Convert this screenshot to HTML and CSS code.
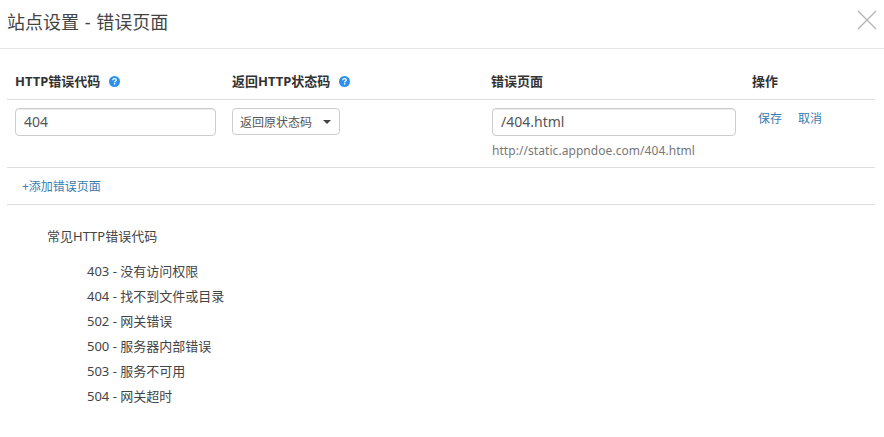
FILE: index.html
```html
<!DOCTYPE html>
<html lang="zh-CN">
<head>
<meta charset="utf-8">
<title>站点设置 - 错误页面</title>
<link rel="stylesheet" href="styles.css">
</head>
<body>
<header class="head">
  <h1 class="title">站点设置 - 错误页面</h1>
  <svg class="close" width="20" height="20" viewBox="0 0 20 20"><path d="M1 1L19 19M19 1L1 19" fill="none" stroke="#b4b4b4" stroke-width="1.3"/></svg>
</header>
<main class="content">
  <div class="row row-head">
    <div class="cell th">HTTP错误代码
      <svg class="help" width="11" height="11" viewBox="0 0 11 11"><circle cx="5.5" cy="5.5" r="5.5" fill="#2b8fee"/><path d="M3.7 4.2C3.8 3.2 4.5 2.7 5.5 2.7C6.5 2.7 7.3 3.3 7.3 4.1C7.3 5.2 5.6 5.2 5.6 6.4" fill="none" stroke="#fff" stroke-width="1.3"/><rect x="4.9" y="7.2" width="1.4" height="1.4" fill="#fff"/></svg>
    </div>
    <div class="cell th">返回HTTP状态码
      <svg class="help" width="11" height="11" viewBox="0 0 11 11"><circle cx="5.5" cy="5.5" r="5.5" fill="#2b8fee"/><path d="M3.7 4.2C3.8 3.2 4.5 2.7 5.5 2.7C6.5 2.7 7.3 3.3 7.3 4.1C7.3 5.2 5.6 5.2 5.6 6.4" fill="none" stroke="#fff" stroke-width="1.3"/><rect x="4.9" y="7.2" width="1.4" height="1.4" fill="#fff"/></svg>
    </div>
    <div class="cell th">错误页面</div>
    <div class="cell th">操作</div>
  </div>
  <div class="row row-body">
    <div class="cell"><div class="input">404</div></div>
    <div class="cell"><div class="select"><span>返回原状态码</span><i class="caret"></i></div></div>
    <div class="cell">
      <div class="input input-page">/404.html</div>
      <div class="url">http://static.appndoe.com/404.html</div>
    </div>
    <div class="cell actions"><a class="link">保存</a><a class="link">取消</a></div>
  </div>
  <div class="row-add"><a class="link">+添加错误页面</a></div>
  <section class="codes">
    <p class="codes-title">常见HTTP错误代码</p>
    <ul class="codes-list">
      <li>403 - 没有访问权限</li>
      <li>404 - 找不到文件或目录</li>
      <li>502 - 网关错误</li>
      <li>500 - 服务器内部错误</li>
      <li>503 - 服务不可用</li>
      <li>504 - 网关超时</li>
    </ul>
  </section>
</main>
</body>
</html>
```
FILE: styles.css
```css
* { box-sizing: border-box; }
html, body { margin: 0; padding: 0; background: #fff; }
body {
  width: 884px;
  height: 437px;
  overflow: hidden;
  font-family: "Noto Sans", "Noto Sans CJK SC", sans-serif;
  font-size: 13px;
  color: #444;
}
.head {
  height: 49px;
  border-bottom: 1px solid #e5e5e5;
  padding: 0 7px;
  display: flex;
  justify-content: space-between;
  align-items: flex-start;
}
.title {
  margin: 9px 0 0;
  font-size: 18px;
  line-height: 26px;
  font-weight: 400;
  word-spacing: 1px;
  color: #444;
}
.close { margin-top: 10px; }
.content { margin: 0 9px 0 7px; }
.row {
  display: grid;
  grid-template-columns: 217px 259px 261px 131px;
}
.row-head { height: 51px; border-bottom: 1px solid #ddd; }
.th {
  padding: 22px 0 0 8px;
  font-size: 13px;
  line-height: 20px;
  font-weight: 700;
  color: #333;
  white-space: nowrap;
}
.help { margin-left: 5px; vertical-align: -1px; }
.row-body { height: 68px; border-bottom: 1px solid #ddd; }
.cell { padding-left: 8px; }
.row-body .cell { padding-top: 8px; }
.input {
  width: 201px;
  height: 28px;
  padding-left: 8px;
  border: 1px solid #ccc;
  border-radius: 4px;
  box-shadow: inset 0 1px 1px rgba(0,0,0,.075);
  font-size: 14px;
  line-height: 26px;
  color: #555;
}
.input-page { width: 244px; margin-left: 1px; }
.select {
  width: 108px;
  height: 27px;
  padding: 0 8px 0 7px;
  border: 1px solid #ccc;
  border-radius: 4px;
  display: flex;
  align-items: center;
  justify-content: space-between;
  font-size: 12px;
  color: #555;
}
.caret {
  width: 0;
  height: 0;
  border-top: 4px solid #444;
  border-left: 4px solid transparent;
  border-right: 4px solid transparent;
}
.url {
  margin: 7px 0 0 1px;
  font-size: 12px;
  line-height: 16px;
  letter-spacing: .06px;
  color: #777;
  white-space: nowrap;
}
.actions { display: flex; gap: 16px; padding-left: 14px; align-items: flex-start; }
.row-body .actions { padding-top: 10px; }
.link { color: #3a7cb0; font-size: 12px; line-height: 18px; white-space: nowrap; }
.row-add {
  height: 37px;
  border-bottom: 1px solid #ddd;
  padding: 9px 0 0 15px;
}
.codes { padding: 22px 0 0 40px; }
.codes-title { margin: 0 0 14px; font-size: 13px; line-height: 18px; color: #444; }
.codes-list { list-style: none; margin: 0; padding: 0 0 0 40px; }
.codes-list li { height: 25px; line-height: 25px; font-size: 13px; color: #444; }
```
